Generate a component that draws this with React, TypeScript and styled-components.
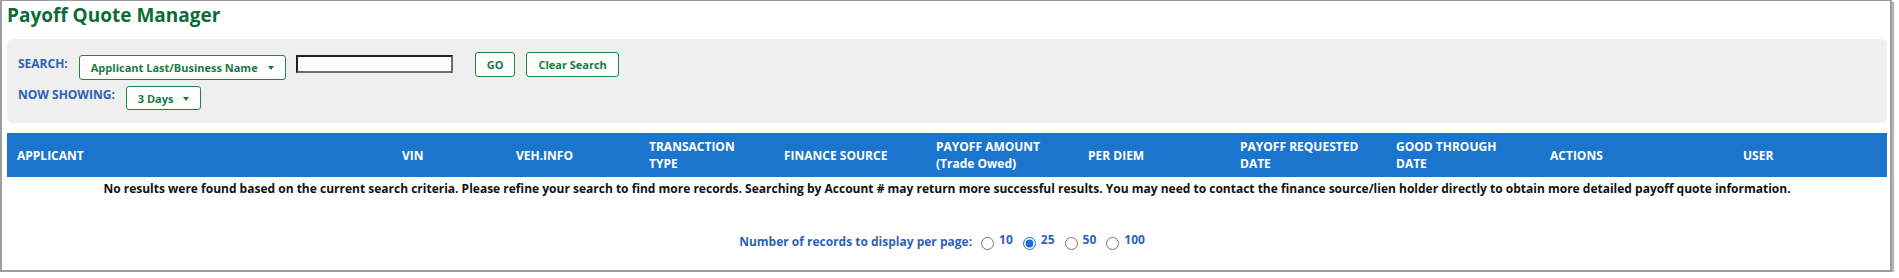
import React, { useState } from "react";
import styled, { createGlobalStyle } from "styled-components";

const Global = createGlobalStyle`
  html, body { margin: 0; padding: 0; background: #ffffff; }
  body { font-family: "Open Sans", "Liberation Sans", Arial, sans-serif; }
  * { box-sizing: border-box; }
`;

const Frame = styled.div`
  width: 1892px;
  height: 272px;
  border-style: solid;
  border-color: #9d9d9d;
  border-width: 1px 2px 2px 2px;
  box-shadow: 2px 2px 1px #b8b8b8;
  padding: 1px 3px 0 5px;
  background: #fff;
  display: flex;
  flex-direction: column;
`;

const Title = styled.h1`
  margin: 0 0 10px 0;
  font-size: 19px;
  line-height: 27px;
  font-weight: 700;
  color: #0e6a37;
`;

const Panel = styled.div`
  width: 1880px;
  background: #efefef;
  border-radius: 6px;
  padding: 13px 11px 13px 11px;
  display: flex;
  flex-direction: column;
  gap: 6px;
`;

const Row = styled.div`
  display: flex;
  align-items: flex-start;
`;

const Label = styled.span<{ $top: number }>`
  font-size: 12px;
  line-height: 16px;
  font-weight: 700;
  color: #2c62b6;
  margin-top: ${(p) => p.$top}px;
  margin-right: 11px;
`;

const SelectBox = styled.button<{ $top: number; $height: number }>`
  display: inline-flex;
  align-items: center;
  height: ${(p) => p.$height}px;
  margin-top: ${(p) => p.$top}px;
  padding: 0 11px 0 11px;
  background: #fff;
  border: 1px solid #1b8a3f;
  border-radius: 3px;
  font-family: inherit;
  font-size: 11px;
  font-weight: 700;
  color: #157a41;
  gap: 10px;
  cursor: pointer;
`;

const Caret = styled.span`
  width: 0;
  height: 0;
  border-left: 3.5px solid transparent;
  border-right: 3.5px solid transparent;
  border-top: 4px solid #157a41;
  margin-top: 1px;
`;

const TextInput = styled.input`
  width: 157px;
  height: 18px;
  margin: 3px 22px 0 10px;
  padding: 0 3px;
  background: #fff;
  border-style: solid;
  border-width: 2px;
  border-color: #222 #6b6b6b #6b6b6b #222;
  font-family: inherit;
  font-size: 12px;
  outline: none;
`;

const ActionButton = styled.button<{ $gapLeft: number }>`
  height: 25px;
  margin-left: ${(p) => p.$gapLeft}px;
  padding: 0 11px;
  background: #fff;
  border: 1px solid #1b8a3f;
  border-radius: 3px;
  font-family: inherit;
  font-size: 11px;
  font-weight: 700;
  color: #157a41;
  cursor: pointer;
`;

const HeaderBar = styled.div`
  margin-top: 10px;
  width: 1880px;
  height: 44px;
  background: #1c75cd;
  display: grid;
  grid-template-columns: 385px 114px 133px 135px 152px 152px 152px 156px 154px 193px 154px;
  align-items: center;
`;

const HeadCell = styled.div`
  padding-left: 10px;
  font-size: 12px;
  line-height: 17px;
  font-weight: 700;
  color: #fff;
`;

const Message = styled.div`
  width: 1880px;
  padding-top: 4px;
  text-align: center;
  font-size: 12px;
  line-height: 16px;
  font-weight: 700;
  color: #111;
`;

const Pager = styled.div`
  width: 1880px;
  margin-top: 36px;
  display: flex;
  justify-content: center;
  align-items: center;
  font-size: 12px;
  line-height: 16px;
  font-weight: 700;
  color: #2c62b6;
`;

const PagerText = styled.span`
  margin-right: 9px;
`;

const RadioLabel = styled.label`
  display: inline-flex;
  align-items: center;
  margin-right: 10px;
  cursor: pointer;
`;

const Radio = styled.input`
  width: 13px;
  height: 13px;
  margin: 4px 5px 0 0;
  accent-color: #1a6fd6;
`;

const Num = styled.span`
  margin-top: -4px;
`;

const columns: string[][] = [
  ["APPLICANT"],
  ["VIN"],
  ["VEH.INFO"],
  ["TRANSACTION", "TYPE"],
  ["FINANCE SOURCE"],
  ["PAYOFF AMOUNT", "(Trade Owed)"],
  ["PER DIEM"],
  ["PAYOFF REQUESTED", "DATE"],
  ["GOOD THROUGH", "DATE"],
  ["ACTIONS"],
  ["USER"],
];

export default function App() {
  const [perPage, setPerPage] = useState("25");
  return (
    <>
      <Global />
      <Frame>
        <Title>Payoff Quote Manager</Title>
        <Panel>
          <Row>
            <Label $top={4}>SEARCH:</Label>
            <SelectBox $top={3} $height={25}>
              Applicant Last/Business Name <Caret />
            </SelectBox>
            <TextInput type="text" />
            <ActionButton $gapLeft={0}>GO</ActionButton>
            <ActionButton $gapLeft={11}>Clear Search</ActionButton>
          </Row>
          <Row>
            <Label $top={1}>NOW SHOWING:</Label>
            <SelectBox $top={0} $height={24}>
              3 Days <Caret />
            </SelectBox>
          </Row>
        </Panel>
        <HeaderBar>
          {columns.map((lines, i) => (
            <HeadCell key={i}>
              {lines.map((l, j) => (
                <div key={j}>{l}</div>
              ))}
            </HeadCell>
          ))}
        </HeaderBar>
        <Message>
          No results were found based on the current search criteria. Please refine your search to find more records. Searching by Account # may return more successful results. You may need to contact the finance source/lien holder directly to obtain more detailed payoff quote information.
        </Message>
        <Pager>
          <PagerText>Number of records to display per page:</PagerText>
          {["10", "25", "50", "100"].map((n) => (
            <RadioLabel key={n}>
              <Radio
                type="radio"
                name="perpage"
                checked={perPage === n}
                onChange={() => setPerPage(n)}
              />
              <Num>{n}</Num>
            </RadioLabel>
          ))}
        </Pager>
      </Frame>
    </>
  );
}
